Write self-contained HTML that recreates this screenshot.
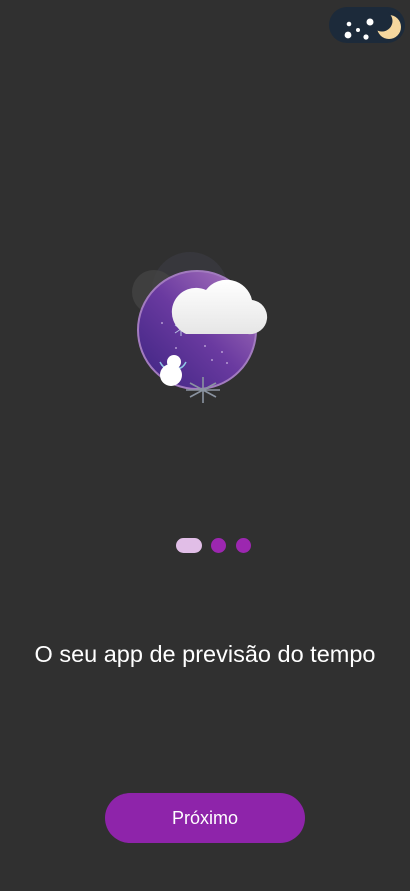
<!DOCTYPE html>
<html><head><meta charset="utf-8"><style>
html,body{margin:0;padding:0;width:410px;height:891px;background:#303030;overflow:hidden;font-family:"Liberation Sans",sans-serif}
.tog{position:absolute;left:329px;top:7px;width:76px;height:36px;border-radius:18px;background:#1c2a3a}
.pill{position:absolute;left:176px;top:538px;width:26px;height:15px;border-radius:8px;background:#e1bee7}
.dot{position:absolute;top:538px;width:15px;height:15px;border-radius:50%;background:#9c27b0}
.t{position:absolute;left:0;width:410px;top:641px;text-align:center;color:#fff;font-size:23.5px}
.btn{position:absolute;left:105px;top:793px;width:200px;height:50px;border-radius:25px;background:#8e24aa;color:#fff;font-size:18px;line-height:50px;text-align:center}
</style></head><body>
<div class="tog"><svg width="76" height="36">
<circle cx="60" cy="20" r="12" fill="#f5d79e"/><circle cx="53" cy="14" r="10.5" fill="#1c2a3a"/>
<circle cx="20" cy="17" r="2.3" fill="#fff"/><circle cx="29" cy="23" r="2" fill="#fff"/><circle cx="41" cy="15" r="3.5" fill="#fff"/>
<circle cx="19" cy="28" r="3.4" fill="#fff"/><circle cx="37" cy="30" r="2.6" fill="#fff"/>
</svg></div>
<svg style="position:absolute;left:0;top:0" width="410" height="450">
<defs><linearGradient id="g" x1="0" y1="1" x2="1" y2="0"><stop offset="0" stop-color="#3b2380"/><stop offset="0.5" stop-color="#6a3aa0"/><stop offset="1" stop-color="#b07cc0"/></linearGradient>
<linearGradient id="c" x1="0" y1="0" x2="0" y2="1"><stop offset="0" stop-color="#fff"/><stop offset="1" stop-color="#e6e6e6"/></linearGradient></defs>
<circle cx="190" cy="290" r="38" fill="#3a3a40" opacity="0.8"/>
<circle cx="154" cy="292" r="22" fill="#444" opacity="0.8"/>
<circle cx="197" cy="330" r="59" fill="url(#g)" stroke="#a27bbf" stroke-width="2"/>
<g fill="#c9b4e0" opacity="0.8"><circle cx="162" cy="323" r="1"/><circle cx="205" cy="346" r="1"/><circle cx="222" cy="352" r="1"/><circle cx="227" cy="363" r="1"/><circle cx="176" cy="348" r="1"/><circle cx="212" cy="360" r="1"/></g>
<g stroke="#b9c4e6" stroke-width="1"><path d="M181 322v14M175 325l12 8M175 333l12-8"/></g>
<g stroke="#8a93a0" stroke-width="1.6"><path d="M203 377v26M190 383l26 14M190 397l26-14M186 390h34"/></g>
<path d="M186 334 H248 A17 17 0 0 0 252 300 A26 26 0 0 0 206 290 A20 20 0 0 0 186 334Z" fill="url(#c)"/>
<path d="M160 362q4 8 10 6M186 362q-4 8-10 6" stroke="#8fc8e6" stroke-width="1.5" fill="none"/>
<circle cx="174" cy="362" r="7" fill="#fff"/><circle cx="171" cy="375" r="11" fill="#fff"/>
</svg>
<div class="pill"></div><div class="dot" style="left:211px"></div><div class="dot" style="left:236px"></div>
<div class="t">O seu app de previsão do tempo</div>
<div class="btn">Próximo</div>
</body></html>
